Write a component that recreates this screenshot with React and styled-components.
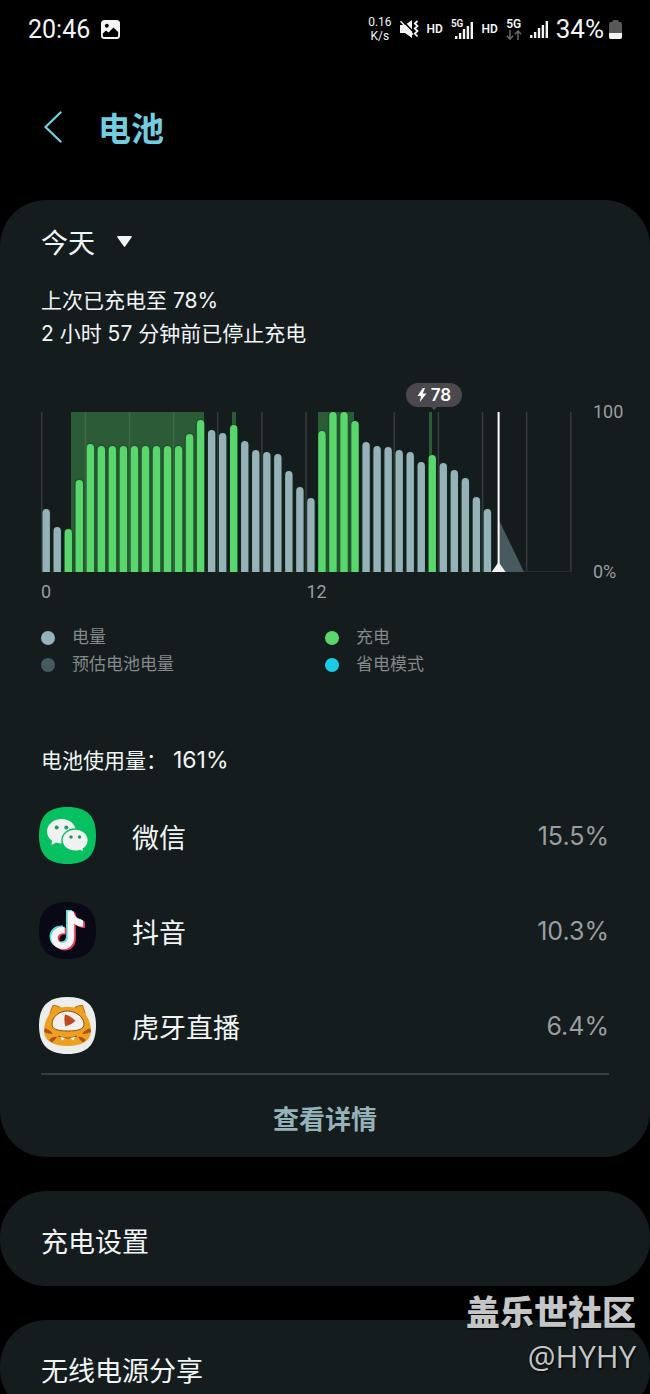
import styled, { createGlobalStyle } from "styled-components";

const bars = [
    63, 45, 43, 92, 128, 126, 126, 126, 126, 126, 126, 126, 126, 138, 152, 142, 139, 147, 131, 122, 120,
    118, 101, 85, 74, 141, 160, 160, 151, 130, 126, 125, 122, 120, 110, 117, 109, 102, 94, 75, 63,
];
const charging = [2, 3, 4, 5, 6, 7, 8, 9, 10, 11, 12, 13, 14, 17, 25, 26, 27, 28, 35];
const chargeBands = [
    { x: 30, width: 133 },
    { x: 191, width: 4 },
    { x: 277, width: 36 },
    { x: 388, width: 3 },
];
const gridLines = Array.from({ length: 13 }, (_, i) => i);

const legend = [
    { label: "电量", color: "#96b2b9" },
    { label: "充电", color: "#59d66c" },
    { label: "预估电池电量", color: "#475a60" },
    { label: "省电模式", color: "#1bcce5" },
];

const apps = [
    { name: "微信", usage: "15.5%", Icon: WechatIcon },
    { name: "抖音", usage: "10.3%", Icon: DouyinIcon },
    { name: "虎牙直播", usage: "6.4%", Icon: HuyaIcon },
];

export default function App() {
    return (
        <>
            <GlobalStyle />
            <Screen>
                <StatusBar />
                <Header>
                    <BackButton aria-label="返回">
                        <svg width="18" height="32" viewBox="0 0 18 32" fill="none">
                            <path d="M16.5 1.5L1.5 16L16.5 30.5" stroke="#72cde0" strokeWidth="2.4" strokeLinecap="round" strokeLinejoin="round" />
                        </svg>
                    </BackButton>
                    <h1>电池</h1>
                </Header>
                <Main>
                    <UsageCard>
                        <DayButton>
                            今天
                            <svg width="15" height="11" viewBox="0 0 15 11">
                                <path d="M1 0H14Q15.5 0 14.5 1.4L8.3 10.2Q7.5 11.2 6.7 10.2L.5 1.4Q-.5 0 1 0Z" fill="#f2f5f5" />
                            </svg>
                        </DayButton>
                        <ChargeInfo>
                            <p>上次已充电至 78%</p>
                            <p>2 小时 57 分钟前已停止充电</p>
                        </ChargeInfo>
                        <BatteryChart />
                        <Legend>
                            {legend.map((item) => (
                                <LegendItem key={item.label} $color={item.color}>{item.label}</LegendItem>
                            ))}
                        </Legend>
                        <UsageTitle>电池使用量： <span>161%</span></UsageTitle>
                        <AppList>
                            {apps.map(({ name, usage, Icon }) => (
                                <AppRow key={name}>
                                    <Icon />
                                    <AppName>{name}</AppName>
                                    <AppUsage>{usage}</AppUsage>
                                </AppRow>
                            ))}
                        </AppList>
                        <DetailsButton>查看详情</DetailsButton>
                    </UsageCard>
                    <SettingButton>充电设置</SettingButton>
                    <SettingButton>无线电源分享</SettingButton>
                </Main>
                <Watermark>
                    <strong>盖乐世社区</strong>
                    <span>@HYHY</span>
                </Watermark>
            </Screen>
        </>
    )
}

function StatusBar() {
    return (
        <StatusContainer>
            <Clock>20:46</Clock>
            <svg width="19" height="19" viewBox="0 0 19 19">
                <rect width="19" height="19" rx="3.5" fill="#f4f4f4" />
                <circle cx="5.8" cy="5.8" r="2" fill="#000" />
                <path d="M1.8 13.5L5 10.5L7.5 12.5L12.5 7.5L17.2 12V15.5Q17.2 17 15.7 17H3.3Q1.8 17 1.8 15.5Z" fill="#000" />
            </svg>
            <StatusIcons>
                <Speed><span>0.16</span><span>K/s</span></Speed>
                <svg width="19" height="19" viewBox="0 0 19 19">
                    <path d="M0 5H5L12 0V18L5 13H0Z" fill="#f4f4f4" />
                    <path d="M2 0L13 11.5" stroke="#000" strokeWidth="1.6" />
                    <path d="M.5 1.2L13 14.5" stroke="#f4f4f4" strokeWidth="1.6" />
                    <path d="M17.5 1L14.8 3.5L17.5 6L14.8 8.5L17.5 11L14.8 13.5L17.5 16.5" stroke="#f4f4f4" strokeWidth="1.8" fill="none" />
                </svg>
                <Hd>HD</Hd>
                <Signal>
                    <Network $small>5G</Network>
                    <SignalBars />
                </Signal>
                <Hd>HD</Hd>
                <Data>
                    <Network>5G</Network>
                    <svg width="16" height="10" viewBox="0 0 16 10" fill="none" stroke="#666" strokeWidth="1.6">
                        <path d="M4 0V9M.8 5.8L4 9L7.2 5.8M12 10V1M8.8 4.2L12 1L15.2 4.2" />
                    </svg>
                </Data>
                <SignalBars />
                <BatteryLevel>
                    34%
                    <svg width="13" height="19" viewBox="0 0 13 19">
                        <path d="M3.5 1Q3.5 0 4.5 0H8.5Q9.5 0 9.5 1V2H11Q13 2 13 4V17Q13 19 11 19H2Q0 19 0 17V4Q0 2 2 2H3.5Z" fill="#585858" />
                        <path d="M0 13H13V17Q13 19 11 19H2Q0 19 0 17Z" fill="#f4f4f4" />
                    </svg>
                </BatteryLevel>
            </StatusIcons>
        </StatusContainer>
    )
}

function SignalBars() {
    return (
        <svg width="18" height="17" viewBox="0 0 18 17" fill="#f4f4f4">
            <rect x="0" y="14" width="2.4" height="3" />
            <rect x="3.9" y="11" width="2.4" height="6" />
            <rect x="7.8" y="7" width="2.4" height="10" />
            <rect x="11.7" y="4" width="2.4" height="13" />
            <rect x="15.6" y="0" width="2.4" height="17" />
        </svg>
    )
}

function BatteryChart() {
    return (
        <ChartRow>
            <Plot>
                <Bubble>
                    <svg width="10" height="14" viewBox="0 0 10 14">
                        <path d="M5.8 0L.5 8H4L2.8 14L9.5 5.5H5.8L8 0Z" fill="#fff" />
                    </svg>
                    78
                </Bubble>
                <svg viewBox="0 0 531 160" role="img" aria-label="电量">
                    {gridLines.map((i) => (
                        <rect key={i} x={Math.max(0, i * 44.13 - 0.5)} y="0" width="1.5" height="160" fill="#373b3d" />
                    ))}
                    <rect x="0" y="159" width="531" height="1" fill="#242c2e" />
                    {chargeBands.map((band) => (
                        <rect key={band.x} x={band.x} y="0" width={band.width} height="160" fill="#2b5b37" />
                    ))}
                    {[1, 2, 3].map((i) => (
                        <rect key={i} x={i * 44.13 - 0.5} y="0" width="1.5" height="160" fill="#3e6a49" />
                    ))}
                    {bars.map((height, i) => (
                        <path
                            key={i}
                            d={`M${1.5 + i * 11.03} 160v${4 - height}a3.7 4 0 0 1 7.4 0v${height - 4}z`}
                            fill={charging.includes(i) ? "#59d66c" : "#96b2b9"}
                            stroke="#0b3a14"
                            strokeOpacity="0.25"
                            strokeWidth="3"
                            paintOrder="stroke"
                        />
                    ))}
                    <path d="M458 108L483 160H458Z" fill="#475a60" />
                    <rect x="456.6" y="0" width="2" height="160" fill="#fff" />
                    <path d="M457.6 150L464.6 160H450.6Z" fill="#f2f2f2" />
                </svg>
                <Hours><span>0</span><span>12</span></Hours>
            </Plot>
            <Scale><span>100</span><span>0%</span></Scale>
        </ChartRow>
    )
}

function WechatIcon() {
    return (
        <svg width="57" height="57" viewBox="0 0 57 57">
            <path d={squircle} fill="#07c160" />
            <path d="M22.5 12C14.5 12 8 17.5 8 24.5C8 28.3 10 31.5 13 33.8L12.5 38L17.2 35.6C19 36.2 20.7 36.5 22.5 36.5C30.5 36.5 37 31 37 24.3C37 17.5 30.5 12 22.5 12Z" fill="#f0f2f1" />
            <path d="M36.3 22C29 22 23 27 23 33.2C23 39.5 29 44.3 36.3 44.3C38 44.3 39.6 44 41 43.6L45 45.5L44.3 42C47.2 40 49.3 36.9 49.3 33.2C49.3 27 43.5 22 36.3 22Z" fill="#f0f2f1" stroke="#07c160" strokeWidth="1.4" />
            <g fill="#1f9c55">
                <circle cx="17.7" cy="20.5" r="2" />
                <circle cx="27.3" cy="20.5" r="2" />
                <circle cx="32" cy="30" r="1.7" />
                <circle cx="40.5" cy="30" r="1.7" />
            </g>
        </svg>
    )
}

function DouyinIcon() {
    const note = "M27 8H33C33.5 13 37 16.5 42.5 17V23.5C39 23.5 36 22.5 33.5 20.5V34C33.5 41.5 28.5 46 22.5 46C16 46 10.5 41 10.5 34.5C10.5 28 16 23 24 23.5V30C20 29.5 17 31.5 17 34.5C17 37.5 19.5 39.5 22.3 39.5C25.3 39.5 27 37.3 27 34.3Z";
    return (
        <svg width="57" height="57" viewBox="0 0 57 57">
            <path d={squircle} fill="#090915" />
            <path d={note} fill="#58dcdb" />
            <path d={note} transform="translate(3.4 2.6)" fill="#e63c62" />
            <path d={note} transform="translate(1.7 1.3)" fill="#f5f5f5" />
        </svg>
    )
}

function HuyaIcon() {
    return (
        <svg width="57" height="57" viewBox="0 0 57 57">
            <path d={squircle} fill="#ededed" />
            <path d="M10 18L13.5 8Q19 8 22 10.5Q28 9 35 10.5Q38 8 44 8L47 18C50 22 52 28 52 34C52 44 42 49 28.5 49C15 49 5 44 5 34C5 28 7 22 10 18Z" fill="#eda11e" />
            <path d="M11 16L14 8.5Q18 8.5 21 10.5M46 16L43.5 8.5Q39 8.5 36 10.5" stroke="#b9701f" strokeWidth="1" fill="none" />
            <path d="M6 31Q11 33 14 37Q9 37 5 35ZM51 31Q46 33 43 37Q48 37 52 35ZM10 43Q14 39 18 40Q16 43 13 45.5ZM47 43Q43 39 39 40Q41 43 44 45.5Z" fill="#a9511f" />
            <path d="M28.5 14C37 14 45 20 45 27C45 32 40 34 28.5 34C18 34 13 32 13 27C13 20 20 14 28.5 14Z" fill="#f5efe9" stroke="#8f4a20" strokeWidth="1" />
            <path d="M26 17.5Q32 19 36.5 24Q32 28 26.5 29.5Q24.5 23 26 17.5Z" fill="#bb4a20" />
            <path d="M19 39Q28.5 43 38 39" stroke="#8f4a20" strokeWidth="1" fill="none" />
            <path d="M21.5 40L26.5 41L23 43.5ZM36 40L31 41L34.5 43.5Z" fill="#fff" />
        </svg>
    )
}

const squircle = "M28.5 0C48 0 57 9 57 28.5C57 48 48 57 28.5 57C9 57 0 48 0 28.5C0 9 9 0 28.5 0Z";

const GlobalStyle = createGlobalStyle`
    * {
        box-sizing: border-box;
        margin: 0;
        padding: 0;
    }
    body {
        background-color: #000;
        color: #f2f5f5;
        font-family: Inter, "Noto Sans CJK SC", sans-serif;
    }
    button {
        border: none;
        background: none;
        color: inherit;
        font-family: inherit;
        cursor: pointer;
    }
    svg {
        display: block;
        flex-shrink: 0;
    }
`
const Screen = styled.div`
    position: relative;
    height: 100vh;
    overflow: hidden;
`
const StatusContainer = styled.div`
    display: flex;
    align-items: center;
    gap: 11px;
    height: 58px;
    padding: 0 28px;
    font-family: Roboto, sans-serif;
`
const Clock = styled.span`
    font-size: 25px;
`
const StatusIcons = styled.div`
    display: flex;
    align-items: center;
    gap: 8px;
    margin-left: auto;
`
const Speed = styled.div`
    display: flex;
    flex-direction: column;
    align-items: center;
    font-size: 12px;
    line-height: 14px;
`
const Hd = styled.span`
    font-size: 12px;
    font-weight: 600;
`
const Signal = styled.div`
    display: flex;
    align-items: flex-start;
    svg {
        margin: 2px 0 0 -8px;
    }
`
const Network = styled.span`
    font-size: ${({ $small }) => ($small ? "10px" : "12px")};
    font-weight: 600;
    line-height: ${({ $small }) => ($small ? "8px" : "12px")};
`
const Data = styled.div`
    display: flex;
    flex-direction: column;
    align-items: center;
`
const BatteryLevel = styled.span`
    display: flex;
    align-items: center;
    gap: 5px;
    font-size: 26px;
`
const Header = styled.header`
    display: flex;
    align-items: center;
    gap: 36px;
    height: 142px;
    padding: 0 44px;
    h1 {
        color: #72cde0;
        font-size: 33px;
        font-weight: 700;
        line-height: 40px;
    }
`
const BackButton = styled.button`
    width: 18px;
    padding-bottom: 4px;
`
const Main = styled.main`
    display: flex;
    flex-direction: column;
    gap: 34px;
`
const UsageCard = styled.section`
    display: flex;
    flex-direction: column;
    padding: 26px 41px 0;
    border-radius: 46px;
    background-color: #141c1e;
`
const DayButton = styled.button`
    display: flex;
    align-items: center;
    align-self: flex-start;
    gap: 22px;
    font-size: 27px;
    line-height: 36px;
    svg {
        margin-bottom: 6px;
    }
`
const ChargeInfo = styled.div`
    margin-top: 22px;
    font-size: 21px;
    line-height: 33px;
`
const ChartRow = styled.div`
    display: flex;
    gap: 21px;
    margin: 62px -16px 0 0;
    color: #999ea0;
    font-family: Roboto, sans-serif;
    font-size: 18px;
    line-height: 20px;
`
const Plot = styled.div`
    position: relative;
    flex: 1;
    > svg {
        width: 100%;
    }
`
const Bubble = styled.div`
    position: absolute;
    left: 74%;
    top: -29px;
    display: flex;
    align-items: center;
    justify-content: center;
    gap: 4px;
    width: 56px;
    height: 24px;
    border-radius: 12px;
    background-color: #4b494e;
    color: #fff;
    font-family: Inter, sans-serif;
    font-size: 17px;
    font-weight: 600;
    transform: translateX(-50%);
    &::after {
        content: "";
        position: absolute;
        top: 23px;
        border: 4px solid transparent;
        border-top-color: #4b494e;
        border-bottom: 0;
    }
`
const Hours = styled.div`
    display: grid;
    grid-template-columns: 1fr 1fr;
    margin-top: 10px;
`
const Scale = styled.div`
    display: flex;
    flex-direction: column;
    justify-content: space-between;
    width: 32px;
    margin: -10px 0 20px;
`
const Legend = styled.ul`
    display: grid;
    grid-template-columns: 1fr 1fr;
    margin-top: 22px;
    list-style: none;
`
const LegendItem = styled.li`
    display: flex;
    align-items: center;
    gap: 17px;
    color: #84898b;
    font-size: 17px;
    line-height: 27px;
    &::before {
        content: "";
        width: 14px;
        height: 14px;
        border-radius: 50%;
        background-color: ${({ $color }) => $color};
    }
`
const UsageTitle = styled.h2`
    margin-top: 67px;
    font-size: 21px;
    font-weight: 400;
    line-height: 30px;
    span {
        font-size: 23px;
    }
`
const AppList = styled.ul`
    margin: 12px 0 0 -2px;
    list-style: none;
`
const AppRow = styled.li`
    display: flex;
    align-items: center;
    height: 95px;
`
const AppName = styled.span`
    margin-left: 36px;
    padding-top: 2px;
    font-size: 27px;
`
const AppUsage = styled.span`
    margin-left: auto;
    color: #999ea0;
    font-size: 25px;
`
const DetailsButton = styled.button`
    height: 84px;
    padding-top: 2px;
    border-top: 2px solid #363d40;
    color: #96b2b9;
    font-size: 26px;
    font-weight: 700;
`
const SettingButton = styled.button`
    height: 95px;
    padding: 4px 41px 0;
    border-radius: 46px;
    background-color: #141c1e;
    font-size: 27px;
    text-align: left;
`
const Watermark = styled.div`
    position: absolute;
    right: 14px;
    bottom: 16px;
    display: flex;
    flex-direction: column;
    align-items: flex-end;
    color: #c3c5c6;
    font-family: "Open Sans", "Noto Sans CJK SC", sans-serif;
    text-shadow: 1px 1px 2px #000;
    strong {
        font-size: 34px;
        font-weight: 900;
        line-height: 44px;
    }
    span {
        font-size: 31px;
        line-height: 44px;
    }
`
